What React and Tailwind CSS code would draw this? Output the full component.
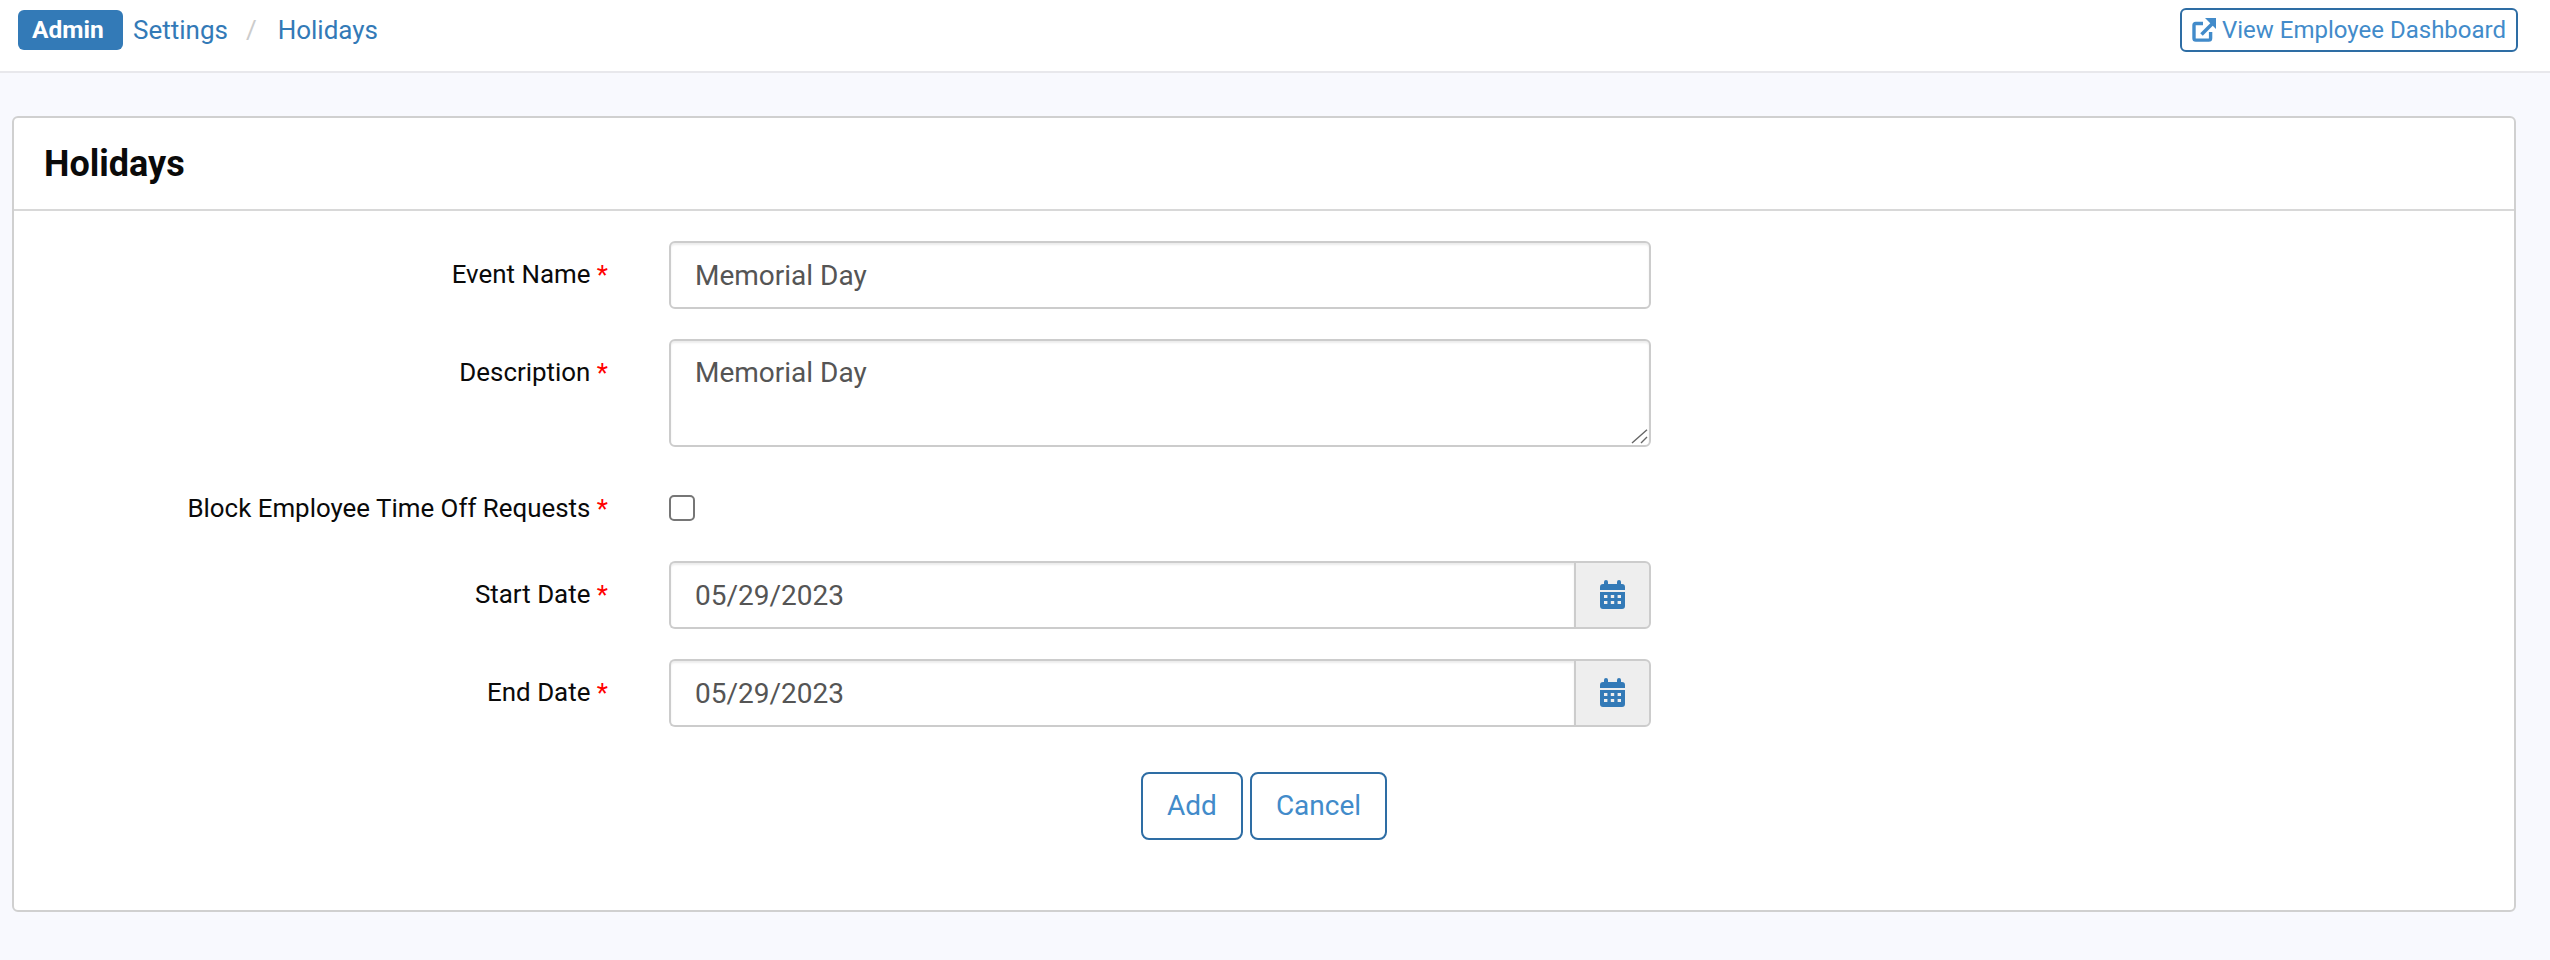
const font = { fontFamily: "Roboto, sans-serif" };

function CalendarIcon() {
  return (
    <svg viewBox="0 0 25 29" className="mb-[2px] w-[25px] h-[29px] fill-[#337ab7]">
      <path
        fillRule="evenodd"
        d="M6 0a2 2 0 0 1 2 2v2h9V2a2 2 0 0 1 4 0v2h1a3 3 0 0 1 3 3v3H0V7a3 3 0 0 1 3-3h1V2a2 2 0 0 1 2-2ZM0 12h25v14a3 3 0 0 1-3 3H3a3 3 0 0 1-3-3V12Zm4 3v3h3.4v-3H4Zm6.8 0v3h3.4v-3h-3.4Zm6.8 0v3H21v-3h-3.4ZM4 21v3h3.4v-3H4Zm6.8 0v3h3.4v-3h-3.4Zm6.8 0v3H21v-3h-3.4Z"
      />
    </svg>
  );
}

function ExternalIcon() {
  return (
    <svg viewBox="0 0 24 24" className="w-[24px] h-[24px]">
      <path
        d="M11 5.5H3.8a1.8 1.8 0 0 0-1.8 1.8v13a1.8 1.8 0 0 0 1.8 1.8h13a1.8 1.8 0 0 0 1.8-1.8V14"
        fill="none"
        stroke="#428bca"
        strokeWidth="3.4"
      />
      <path d="M9.5 16.5 20 6" fill="none" stroke="#428bca" strokeWidth="3.6" />
      <path d="M13 0H24V11Z" fill="#428bca" />
    </svg>
  );
}

function Label({ children, className = "" }) {
  return (
    <label className={`pr-[3px] text-right text-[25.9px] leading-[36px] text-[#0a0a0a] ${className}`}>
      {children} <span className="text-[#ff0000]">*</span>
    </label>
  );
}

const inputClass =
  "block w-full h-[68px] rounded-[6px] border-2 border-[#cccccc] bg-white px-[24px] text-[28px] text-[#555555] shadow-[inset_0_2px_2px_rgba(0,0,0,0.075)] outline-none";

function DateField({ value }) {
  return (
    <div className="flex h-[68px] w-full">
      <input
        readOnly
        value={value}
        className="h-full flex-1 min-w-0 rounded-l-[6px] border-2 border-r-0 border-[#cccccc] bg-white px-[24px] text-[28px] text-[#555555] shadow-[inset_0_2px_2px_rgba(0,0,0,0.075)] outline-none"
      />
      <div className="flex h-full w-[77px] items-center justify-center rounded-r-[6px] border-2 border-[#cccccc] bg-[#eeeeee]">
        <CalendarIcon />
      </div>
    </div>
  );
}

export default function App() {
  return (
    <div style={font} className="min-h-screen bg-[#f8f9fe]">
      {/* Top bar */}
      <header className="flex h-[73px] items-start justify-between border-b-2 border-[#e8e8ec] bg-white pl-[18px] pr-[32px]">
        <div className="flex items-center h-[60px] text-[26px] text-[#337ab7]">
          <span className="flex h-[40px] w-[105px] items-center rounded-[6px] bg-[#337ab7] pl-[14px] text-[24.5px] font-bold text-white">
            Admin
          </span>
          <a className="ml-[10px]">Settings</a>
          <span className="ml-[18px] text-[#cccccc]">/</span>
          <a className="ml-[21px]">Holidays</a>
        </div>
        <a className="mt-[8px] flex h-[44px] w-[338px] items-center justify-center gap-[6px] rounded-[6px] border-2 border-[#2e6da4] text-[24px] text-[#428bca]">
          <ExternalIcon />
          View Employee Dashboard
        </a>
      </header>

      {/* Card */}
      <section className="mx-[12px] mr-[34px] mt-[43px] rounded-[6px] border-2 border-[#d0d0d0] bg-white">
        <div className="flex h-[93px] items-center border-b-2 border-[#d8d8d8] px-[30px]">
          <h1 className="text-[36px] font-bold text-[#0a0a0a]">Holidays</h1>
        </div>

        <form className="pt-[30px] pb-[70px]">
          <div className="grid grid-cols-[597px_982px] gap-x-[58px] gap-y-[30px]">
            <Label className="pt-[15px]">Event Name</Label>
            <input readOnly value="Memorial Day" className={inputClass} />

            <Label className="pt-[15px]">Description</Label>
            <div className="relative h-[108px]">
              <textarea
                readOnly
                value="Memorial Day"
                className="block h-full w-full resize-none rounded-[6px] border-2 border-[#cccccc] bg-white px-[24px] py-[14px] text-[28px] leading-[36px] text-[#555555] shadow-[inset_0_2px_2px_rgba(0,0,0,0.075)] outline-none"
              />
              {/* resize grip */}
              <svg viewBox="0 0 20 20" className="absolute bottom-[2px] right-[2px] h-[20px] w-[20px]">
                <path d="M3 18 18 4.7M12 18l6-6" stroke="#666666" strokeWidth="1.4" fill="none" />
              </svg>
            </div>

            <Label className="pt-[13px] pb-[5px]">Block Employee Time Off Requests</Label>
            <div className="flex items-center pt-[8px]">
              <input
                type="checkbox"
                className="h-[26px] w-[26px] appearance-none rounded-[5px] border-2 border-[#767676] bg-white"
              />
            </div>

            <Label className="pt-[15px]">Start Date</Label>
            <DateField value="05/29/2023" />

            <Label className="pt-[15px]">End Date</Label>
            <DateField value="05/29/2023" />
          </div>

          <div className="mt-[45px] flex justify-center gap-[7px]">
            <button
              type="button"
              className="h-[68px] w-[102px] rounded-[8px] border-2 border-[#2e6da4] bg-white text-[28px] text-[#428bca]"
            >
              Add
            </button>
            <button
              type="button"
              className="h-[68px] w-[137px] rounded-[8px] border-2 border-[#2e6da4] bg-white text-[28px] text-[#428bca]"
            >
              Cancel
            </button>
          </div>
        </form>
      </section>
    </div>
  );
}
